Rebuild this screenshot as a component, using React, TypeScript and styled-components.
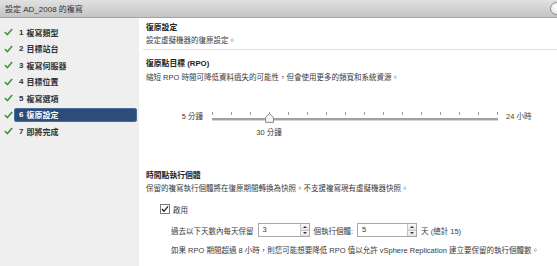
import React from 'react'
import styled, { createGlobalStyle } from 'styled-components'

const GlobalStyle = createGlobalStyle`
  html, body {
    margin: 0;
    padding: 0;
    background: #fff;
  }
  body {
    font-family: 'Liberation Sans', 'Noto Sans CJK TC', sans-serif;
    font-size: 7.5px;
    color: #3a3a3a;
  }
`

const steps = ['複寫類型', '目標站台', '複寫伺服器', '目標位置', '複寫選項', '復原設定', '即將完成']
const activeStep = 5
const tickCount = 16
const thumbIndex = 3
const trackWidth = 286

export default function App() {
  const thumbLeft = (trackWidth - 1) / (tickCount - 1) * thumbIndex

  return (
    <Window>
      <GlobalStyle />
      <TitleBar>
        <span>設定 AD_2008 的複寫</span>
        <CloseButton />
      </TitleBar>
      <Main>
        <Nav>
          {steps.map((label, i) => (
            <NavItem key={label}>
              <svg width='9' height='8' viewBox='0 0 9 8'>
                <path d='M0.8 4.2 L3.4 6.6 L8.2 1' fill='none' stroke='#3f9a3c' strokeWidth='1.6' />
              </svg>
              <Pill active={i === activeStep}>
                <span>{i + 1}</span>
                <span>{label}</span>
              </Pill>
            </NavItem>
          ))}
        </Nav>
        <Content>
          <Section>
            <Heading>復原設定</Heading>
            <Text>設定虛擬機器的復原設定。</Text>
          </Section>
          <Separator />
          <Section>
            <Heading top={8}>復原點目標 (RPO)</Heading>
            <Text top={2}>縮短 RPO 時間可降低資料遺失的可能性，但會使用更多的頻寬和系統資源。</Text>
            <SliderRow>
              <SliderLabel>5 分鐘</SliderLabel>
              <TrackArea>
                <Ticks>
                  {Array.from({ length: tickCount }).map((_, i) => (
                    <Tick key={i} />
                  ))}
                </Ticks>
                <Track />
                <Thumb style={{ left: thumbLeft - 4 }} width='9' height='10' viewBox='0 0 9 10'>
                  <path d='M4.5 0.6 L8.4 4.2 L8.4 9.4 L0.6 9.4 L0.6 4.2 Z' fill='#f7f7f7' stroke='#8a8a8a' strokeWidth='1' />
                </Thumb>
              </TrackArea>
              <span>24 小時</span>
            </SliderRow>
            <ValueRow>
              <ValueLabel style={{ marginLeft: thumbLeft }}>30 分鐘</ValueLabel>
            </ValueRow>
            <Heading top={31}>時間點執行個體</Heading>
            <Text>保留的複寫執行個體將在復原期間轉換為快照。不支援複寫現有虛擬機器快照。</Text>
            <CheckRow>
              <CheckBox width='10' height='10' viewBox='0 0 10 10'>
                <rect x='0.5' y='0.5' width='9' height='9' fill='#fff' stroke='#7a7a7a' />
                <path d='M2 5 L4 7.3 L8 2.3' fill='none' stroke='#222' strokeWidth='1.3' />
              </CheckBox>
              <span>啟用</span>
            </CheckRow>
            <InputRow>
              <span>過去以下天數內每天保留</span>
              <Spinner width={52} value='3' />
              <span>個執行個體:</span>
              <Spinner width={60} value='5' />
              <span>天 (總計 15)</span>
            </InputRow>
            <Note>如果 RPO 期間超過 8 小時，則您可能想要降低 RPO 值以允許 vSphere Replication 建立要保留的執行個體數。</Note>
          </Section>
        </Content>
      </Main>
    </Window>
  )
}

function Spinner({ width, value }: { width: number; value: string }) {
  return (
    <InputBox width={width}>
      <InputValue>{value}</InputValue>
      <SpinButtons>
        <SpinHalf><Arrow up /></SpinHalf>
        <SpinHalf><Arrow /></SpinHalf>
      </SpinButtons>
    </InputBox>
  )
}

const Window = styled.div`
  width: 557px;
  height: 266px;
  display: flex;
  flex-direction: column;
  overflow: hidden;
`

const TitleBar = styled.div`
  height: 17px;
  flex-shrink: 0;
  display: flex;
  align-items: center;
  justify-content: space-between;
  padding-left: 5px;
  background: linear-gradient(#e1e1e1, #c4c4c4);
  border-bottom: 1px solid #a3a3a3;
  font-size: 8px;
  color: #333;
  overflow: hidden;
`

const CloseButton = styled.div`
  width: 11px;
  height: 11px;
  border-radius: 50%;
  border: 1px solid #8c8c8c;
  background: radial-gradient(circle at 40% 35%, #ffffff, #d9d9d9);
  margin-right: -6px;
`

const Main = styled.div`
  flex: 1;
  display: flex;
`

const Nav = styled.div`
  width: 139px;
  flex-shrink: 0;
  background: #efefef;
  padding-top: 6px;
`

const NavItem = styled.div`
  height: 16.5px;
  display: flex;
  align-items: center;
  padding-left: 4px;
`

const Pill = styled.div<{ active?: boolean }>`
  flex: 1;
  height: 14px;
  margin: 0 2px 0 1px;
  padding-left: 5px;
  display: flex;
  align-items: center;
  gap: 3px;
  border-radius: 3px;
  font-size: 8px;
  font-weight: bold;
  background: ${p => (p.active ? '#2c4d7a' : 'transparent')};
  box-shadow: ${p => (p.active ? 'inset 0 0 0 1px #4a6d9c' : 'none')};
  color: ${p => (p.active ? '#fff' : '#333')};
`

const Content = styled.div`
  flex: 1;
  padding: 4px 0 0 4px;
`

const Section = styled.div`
  padding-left: 3px;
  display: flex;
  flex-direction: column;
  align-items: flex-start;
`

const Heading = styled.div<{ top?: number }>`
  font-size: 7.8px;
  font-weight: bold;
  line-height: 12px;
  color: #222;
  margin-top: ${p => p.top ?? 0}px;
`

const Text = styled.div<{ top?: number }>`
  line-height: 12px;
  margin-top: ${p => p.top ?? 1}px;
`

const Separator = styled.div`
  height: 1px;
  background: #dedede;
  margin-top: 2px;
`

const SliderRow = styled.div`
  display: flex;
  align-items: center;
  height: 14px;
  margin-top: 24px;
  gap: 8px;
`

const SliderLabel = styled.span`
  width: 57px;
  text-align: right;
  margin-right: 1px;
`

const TrackArea = styled.div`
  position: relative;
  width: ${trackWidth}px;
  height: 14px;
`

const Ticks = styled.div`
  display: flex;
  justify-content: space-between;
  margin-top: 4px;
`

const Tick = styled.div`
  width: 1px;
  height: 3px;
  background: #9a9a9a;
`

const Track = styled.div`
  margin-top: 3px;
  height: 2px;
  background: #a2a2a2;
  border-bottom: 1px solid #d6d6d6;
`

const Thumb = styled.svg`
  position: absolute;
  top: 5px;
`

const ValueRow = styled.div`
  margin-top: 5px;
  padding-left: 66px;
  line-height: 12px;
`

const ValueLabel = styled.span`
  display: inline-block;
  transform: translateX(-50%);
`

const CheckRow = styled.div`
  display: flex;
  align-items: center;
  gap: 3px;
  height: 12px;
  margin-top: 8px;
  margin-left: 14px;
`

const CheckBox = styled.svg`
  display: block;
`

const InputRow = styled.div`
  display: flex;
  align-items: center;
  gap: 4px;
  height: 14px;
  margin-top: 8px;
  margin-left: 25px;
`

const InputBox = styled.div<{ width: number }>`
  box-sizing: border-box;
  width: ${p => p.width}px;
  height: 14px;
  display: flex;
  border: 1px solid #a8a8a8;
  background: #fff;
`

const InputValue = styled.span`
  flex: 1;
  padding-left: 4px;
  line-height: 12px;
`

const SpinButtons = styled.div`
  width: 8px;
  display: flex;
  flex-direction: column;
  border-left: 1px solid #c4c4c4;
`

const SpinHalf = styled.div`
  flex: 1;
  display: flex;
  align-items: center;
  justify-content: center;
  background: linear-gradient(#fafafa, #e2e2e2);
  & + & {
    border-top: 1px solid #c4c4c4;
  }
`

const Arrow = styled.div<{ up?: boolean }>`
  width: 0;
  height: 0;
  border-left: 2px solid transparent;
  border-right: 2px solid transparent;
  ${p => (p.up ? 'border-bottom: 2px solid #333;' : 'border-top: 2px solid #333;')}
`

const Note = styled.div`
  line-height: 12px;
  margin-top: 8px;
  margin-left: 25px;
`
